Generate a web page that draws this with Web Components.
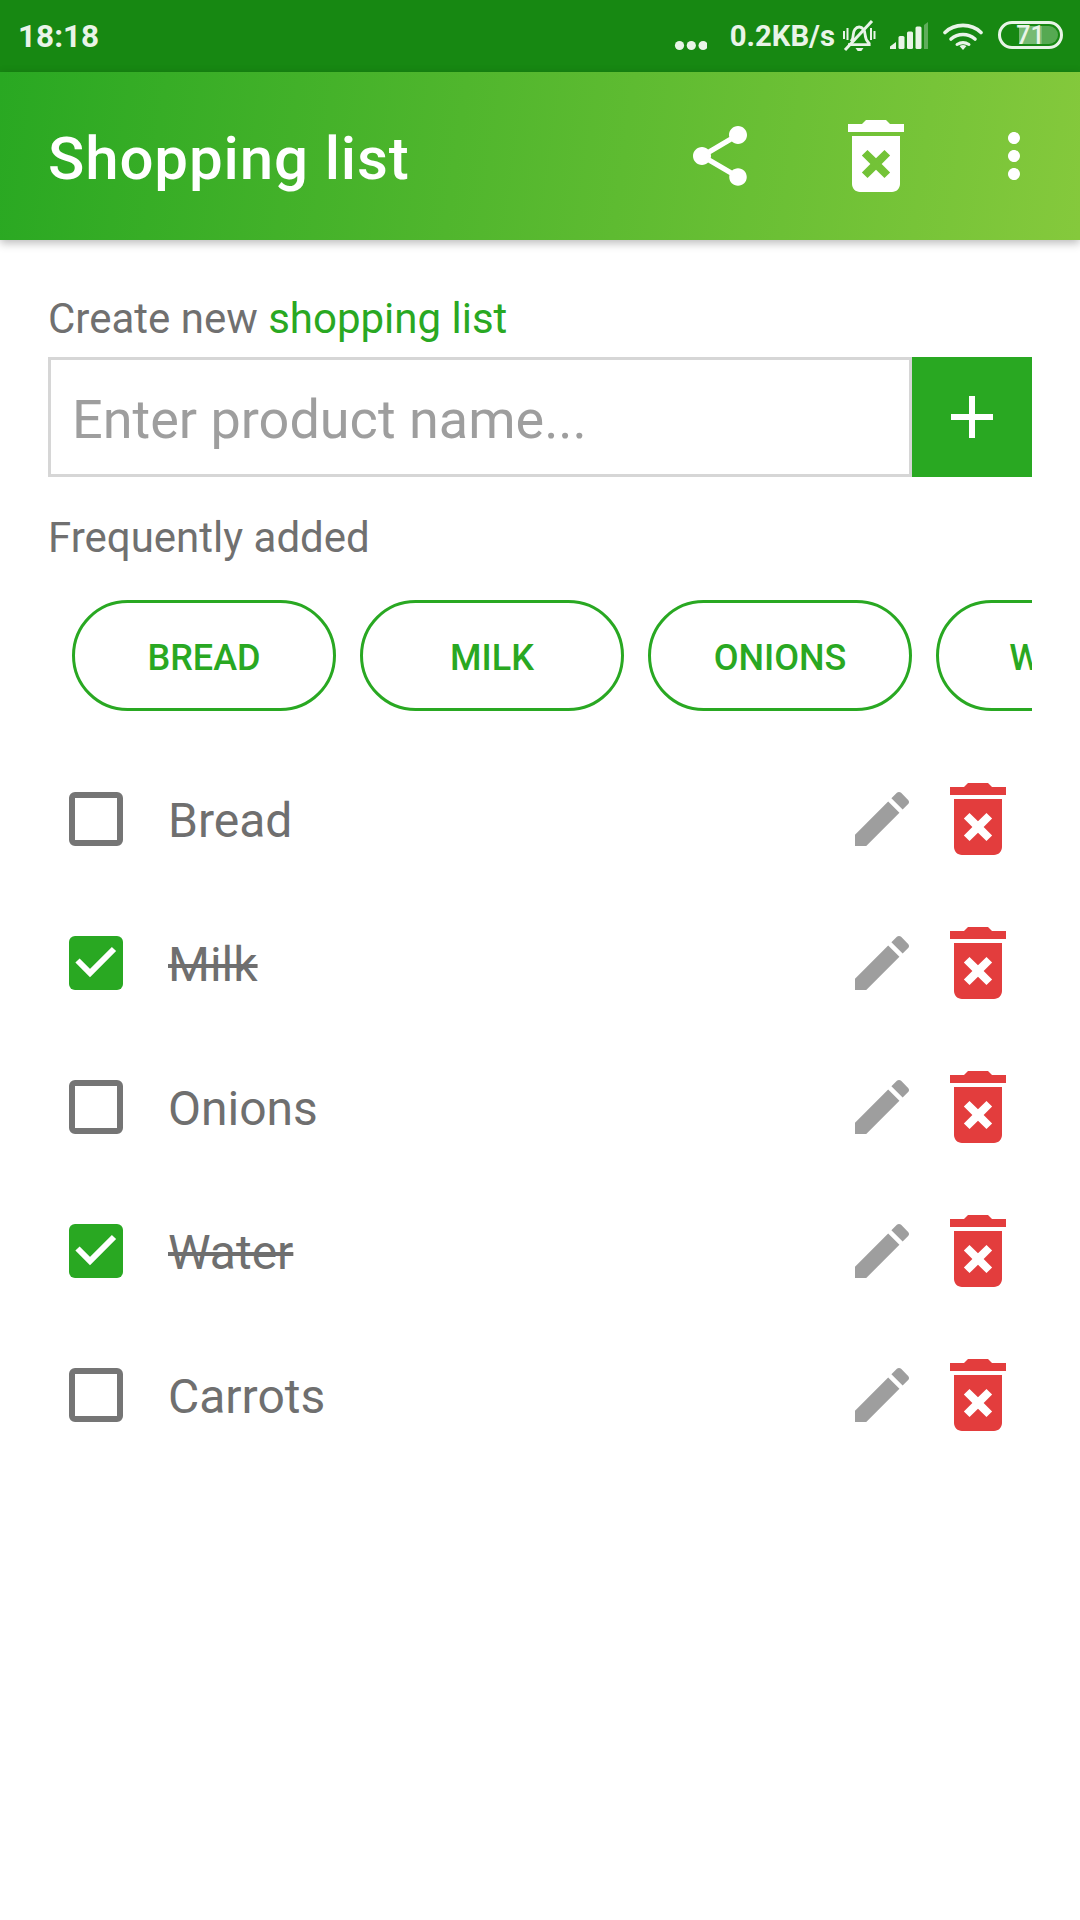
<!DOCTYPE html>
<html lang="en">
<head>
<meta charset="utf-8">
<title>Shopping list</title>
<style>
html,body{margin:0;padding:0;background:#fff}
body{width:1080px;height:1920px;overflow:hidden;font-family:Roboto,"Liberation Sans",sans-serif}
</style>
</head>
<body>
<shop-app></shop-app>

<template id="status-tpl">
<style>
:host{display:flex;align-items:center;height:72px;background:#178812;color:#e9f4e8;font:700 31.5px/72px Roboto,sans-serif;padding:0 17px 0 18px;box-sizing:border-box}
.time{flex:none;position:relative;top:1px}
.right{margin-left:auto;display:flex;align-items:center}
.dots{width:33px;height:72px;display:block;margin-left:0}
.speed{font-size:29.3px;margin-left:23px;position:relative;top:0}
.bell{display:block;margin-left:7px}
.sig{display:block;margin-left:14px}
.wifi{display:block;margin-left:15px}
.bat{margin-left:15px;width:65px;height:28px;box-sizing:border-box;border:3px solid #e9f4e8;border-radius:14px;position:relative;top:-1px;overflow:hidden}
.lvl{position:absolute;left:18px;top:2px;bottom:2px;width:39px;background:rgba(233,244,232,.3);border-radius:0 10px 10px 0}
.lvl2{position:absolute;left:18px;top:2px;bottom:2px;width:23px;background:rgba(233,244,232,.22)}
.n{position:absolute;left:0;right:0;top:0;bottom:0;text-align:center;font:500 25px/23px Roboto,sans-serif;color:#e9f4e8}
</style>
<span class="time">18:18</span>
<div class="right">
<svg class="dots" viewBox="0 0 33 72"><g fill="#e9f4e8"><circle cx="5.500" cy="45.500" r="4.600"/><circle cx="17.300" cy="45.500" r="4.600"/><circle cx="29.100" cy="45.500" r="4.600"/></g></svg>
<span class="speed">0.2KB/s</span>
<svg class="bell" width="34" height="32" viewBox="0 0 34 32" fill="none" stroke="#e9f4e8"><path d="M9 21.500c1.500-1.500 2.200-3 2.200-6.500 0-4.500 2.600-8 6-8s6 3.500 6 8c0 3.500.8 5.200 4 8.500v1.200H6" stroke-width="2.800"/><path d="M13.500 28h8l-2.200 3h-3.600z" fill="#e9f4e8" stroke="none"/><path d="M30 1 3 30" stroke-width="3"/><path d="M2 11v8M5.500 8v12M29 8v12M32.500 11v8" stroke-width="2"/></svg>
<svg class="sig" width="38" height="28" viewBox="0 0 38 28"><g fill="#e9f4e8"><path d="M0 27v-2.500l6-4.500v7z"/><rect x="8.500" y="14" width="6" height="13" rx="1.500"/><rect x="17" y="9.500" width="6" height="17.500" rx="1.500"/><rect x="25.500" y="4.500" width="6" height="22.500" rx="1.500"/></g><path d="M34 3l4-3v27h-4z" fill="#e9f4e8" opacity=".35"/></svg>
<svg class="wifi" width="40" height="28" viewBox="0 0 40 28" fill="none" stroke="#e9f4e8" stroke-width="3.600" stroke-linecap="round"><path d="M2 10.500C11.500 1 28.500 1 38 10.500"/><path d="M8 17c7-6 17-6 24 0"/><path d="M14 22.500c4-2.500 8-2.500 12 0" stroke-width="3"/><path d="M16.500 24 20 28l3.500-4c-2.300-1.200-4.700-1.200-7 0z" fill="#e9f4e8" stroke="none"/></svg>
<div class="bat"><div class="lvl"></div><div class="lvl2"></div><div class="n">71</div></div>
</div>
</template>

<template id="bar-tpl">
<style>
:host{display:flex;align-items:center;height:168px;background:linear-gradient(98deg,#29a822 0%,#85c93c 100%);box-shadow:0 3px 9px rgba(0,0,0,.28);position:relative;padding:0 30px 0 48px;box-sizing:border-box;color:#fff}
h1{margin:0;font:500 60px/72px Roboto,sans-serif;letter-spacing:.88px;flex:1;position:relative;top:3px}
svg{display:block;fill:#fff;flex:none;position:relative}
.sh{width:72px;height:72px;margin-right:72px}
.tr{width:96px;height:96px;margin-right:54px}
.mo{width:72px;height:72px}
</style>
<h1><slot></slot></h1>
<svg class="sh" viewBox="0 0 24 24"><path d="M18 16.080c-.76 0-1.440.3-1.960.77L8.910 12.700c.05-.23.09-.46.09-.7s-.04-.47-.09-.7l7.050-4.110c.54.5 1.250.81 2.040.81 1.660 0 3-1.340 3-3s-1.340-3-3-3-3 1.340-3 3c0 .24.04.47.09.7L8.040 9.810C7.500 9.310 6.790 9 6 9c-1.660 0-3 1.340-3 3s1.340 3 3 3c.79 0 1.500-.31 2.040-.81l7.120 4.160c-.05.21-.08.43-.08.65 0 1.610 1.310 2.920 2.920 2.920 1.610 0 2.920-1.310 2.920-2.920s-1.310-2.920-2.920-2.920z"/></svg>
<svg class="tr" viewBox="0 0 24 24"><path d="M6 19c0 1.100.9 2 2 2h8c1.100 0 2-.9 2-2V7H6v12zm2.460-7.120l1.410-1.410L12 12.590l2.120-2.120 1.410 1.410L13.410 14l2.120 2.120-1.410 1.410L12 15.410l-2.120 2.120-1.410-1.410L10.590 14l-2.130-2.120zM15.500 4l-1-1h-5l-1 1H5v2h14V4z"/></svg>
<svg class="mo" viewBox="0 0 24 24"><path d="M12 8c1.100 0 2-.9 2-2s-.9-2-2-2-2 .9-2 2 .9 2 2 2zm0 2c-1.100 0-2 .9-2 2s.9 2 2 2 2-.9 2-2-.9-2-2-2zm0 6c-1.100 0-2 .9-2 2s.9 2 2 2 2-.9 2-2-.9-2-2-2z"/></svg>
</template>

<template id="label-tpl">
<style>
:host{display:block;font:400 42px/50px Roboto,sans-serif;color:#707070;position:relative;top:1px}
</style>
<slot></slot>
</template>

<template id="add-tpl">
<style>
:host{display:flex;height:120px}
.f{flex:1;box-sizing:border-box;border:3px solid #d6d6d6;padding:6px 0 0 21px;font:400 54px/108px Roboto,sans-serif;color:#9e9e9e}
.b{flex:none;width:120px;background:#29a822;display:flex;align-items:center;justify-content:center}
svg{display:block}
</style>
<div class="f"><slot></slot></div>
<div class="b"><svg width="42" height="42" viewBox="0 0 42 42" fill="#fff"><path d="M18 0h6v18h18v6H24v18h-6V24H0v-6h18z"/></svg></div>
</template>

<template id="chips-tpl">
<style>
:host{display:flex;gap:24px;overflow:hidden;padding-left:24px}
</style>
<slot></slot>
</template>

<template id="chip-tpl">
<style>
:host{display:flex;flex:none;align-items:center;justify-content:center;box-sizing:border-box;width:264px;height:111px;border:3px solid #29a822;border-radius:56px;color:#29a822;font:500 36px/42px Roboto,sans-serif;padding-top:4px}
</style>
<slot></slot>
</template>

<template id="row-tpl">
<style>
:host{display:flex;align-items:center;height:144px;padding:0 6px 0 21px;color:#6f6f6f;font:400 48px/56px Roboto,sans-serif}
.box{flex:none;width:54px;height:54px;box-sizing:border-box;border:6px solid #757575;border-radius:6px;margin-right:45px;display:flex}
:host([done]) .box{background:#29a822;border:0}
.tick{display:none}
:host([done]) .tick{display:block}
.t{flex:1;position:relative;top:2px}
:host([done]) .t{text-decoration:line-through}
.ed{width:72px;height:72px;fill:#9e9e9e;display:block;flex:none;margin-right:12px}
.rm{width:96px;height:96px;fill:#e33d3d;display:block;flex:none}
</style>
<div class="box"><svg class="tick" width="54" height="54" viewBox="0 0 54 54" fill="none" stroke="#fff" stroke-width="6"><path d="M8.500 24.500 21 37 45 13"/></svg></div>
<div class="t"><slot></slot></div>
<svg class="ed" viewBox="0 0 24 24"><path d="M3 17.250V21h3.750L17.810 9.940l-3.750-3.750L3 17.250zM20.710 7.040c.39-.39.39-1.020 0-1.410l-2.340-2.340c-.39-.39-1.020-.39-1.410 0l-1.830 1.830 3.750 3.750 1.830-1.830z"/></svg>
<svg class="rm" viewBox="0 0 24 24"><path d="M6 19c0 1.100.9 2 2 2h8c1.100 0 2-.9 2-2V7H6v12zm2.460-7.120l1.410-1.410L12 12.590l2.120-2.120 1.410 1.410L13.410 14l2.120 2.120-1.410 1.410L12 15.410l-2.120 2.120-1.410-1.410L10.590 14l-2.130-2.120zM15.500 4l-1-1h-5l-1 1H5v2h14V4z"/></svg>
</template>

<template id="app-tpl">
<style>
:host{display:block;width:1080px;height:1920px;background:#fff}
main{padding:53px 48px 0;display:flex;flex-direction:column}
.a{margin-top:14px}
.b{margin-top:35px}
.c{margin-top:38px}
.d{margin-top:36px}
em{font-style:normal;color:#29a822}
</style>
<status-bar></status-bar>
<app-bar>Shopping list</app-bar>
<main>
<sec-label>Create new <em>shopping list</em></sec-label>
<add-field class="a">Enter product name...</add-field>
<sec-label class="b">Frequently added</sec-label>
<chip-strip class="c">
<quick-chip>BREAD</quick-chip>
<quick-chip>MILK</quick-chip>
<quick-chip>ONIONS</quick-chip>
<quick-chip>WATER</quick-chip>
</chip-strip>
<div class="d">
<list-row>Bread</list-row>
<list-row done>Milk</list-row>
<list-row>Onions</list-row>
<list-row done>Water</list-row>
<list-row>Carrots</list-row>
</div>
</main>
</template>

<script>
const make = (name, id) => customElements.define(name, class extends HTMLElement {
  constructor() {
    super();
    this.attachShadow({mode: 'open'}).appendChild(document.getElementById(id).content.cloneNode(true));
  }
});
make('status-bar', 'status-tpl');
make('app-bar', 'bar-tpl');
make('sec-label', 'label-tpl');
make('add-field', 'add-tpl');
make('chip-strip', 'chips-tpl');
make('quick-chip', 'chip-tpl');
make('list-row', 'row-tpl');
make('shop-app', 'app-tpl');
</script>
</body>
</html>
